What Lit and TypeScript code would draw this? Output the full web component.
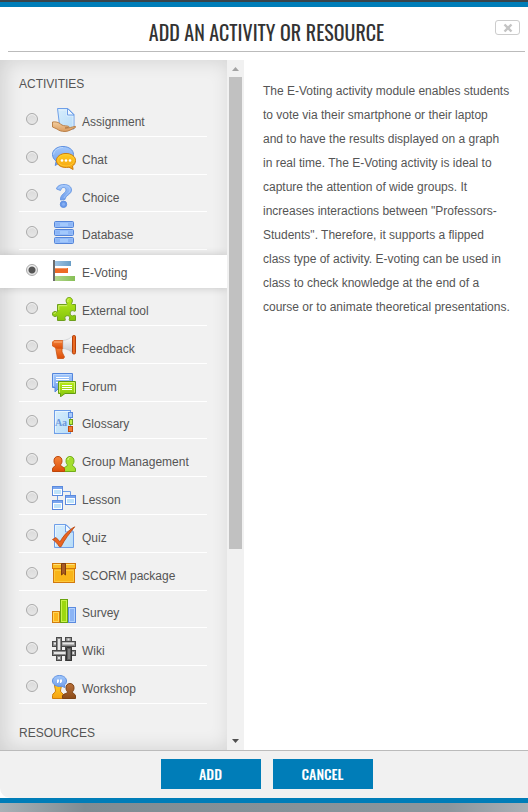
import { LitElement, html, svg, css, type TemplateResult } from "lit";
import { customElement, property, state } from "lit/decorators.js";
import { classMap } from "lit/directives/class-map.js";

const gradients = svg`
  <defs>
    <linearGradient id="sky" x1="0" y1="0" x2="0" y2="1"><stop offset="0" stop-color="#a3c8fb"/><stop offset="1" stop-color="#6f9dea"/></linearGradient>
    <linearGradient id="page" x1="0" y1="0" x2="1" y2="1"><stop offset="0" stop-color="#d8eefc"/><stop offset="1" stop-color="#b7dcf8"/></linearGradient>
    <linearGradient id="gold" x1="0" y1="0" x2="0" y2="1"><stop offset="0" stop-color="#ffcb22"/><stop offset="1" stop-color="#f5a212"/></linearGradient>
    <linearGradient id="fire" x1="0" y1="0" x2="0" y2="1"><stop offset="0" stop-color="#f5843a"/><stop offset="1" stop-color="#dc4d08"/></linearGradient>
    <linearGradient id="lime" x1="0" y1="0" x2="0" y2="1"><stop offset="0" stop-color="#b8ec1c"/><stop offset="1" stop-color="#84c40c"/></linearGradient>
    <linearGradient id="skin" x1="0" y1="0" x2="0" y2="1"><stop offset="0" stop-color="#f4cfa0"/><stop offset="1" stop-color="#d99b5f"/></linearGradient>
    <linearGradient id="steel" x1="0" y1="0" x2="1" y2="0"><stop offset="0" stop-color="#9fc3e2"/><stop offset="1" stop-color="#6a9ec6"/></linearGradient>
    <linearGradient id="leaf" x1="0" y1="0" x2="1" y2="0"><stop offset="0" stop-color="#b3d68c"/><stop offset="1" stop-color="#86bf55"/></linearGradient>
    <linearGradient id="cone" x1="0" y1="0" x2="0" y2="1"><stop offset="0" stop-color="#ffffff"/><stop offset="1" stop-color="#c3c6cc"/></linearGradient>
    <linearGradient id="wood" x1="0" y1="0" x2="0" y2="1"><stop offset="0" stop-color="#b9703a"/><stop offset="1" stop-color="#8b4a17"/></linearGradient>
  </defs>`;

const disk = (y: number) => svg`
  <rect x="2.5" y=${y + 0.5} width="19" height="6" rx="1" fill="#7faaf0" stroke="#5585d8"/>
  <rect x="3.5" y=${y + 1.5} width="17" height="4" fill="#8db6f6" stroke="#94bcf9"/>
  <rect x="8" y=${y + 2} width="8" height="3" fill="#a3c9fc"/>`;

const lessonBox = (x: number, y: number) => svg`
  <rect x=${x + 0.5} y=${y + 0.5} width="10" height="9" fill="#fff" stroke="#5b8ade"/>
  <rect x=${x + 1} y=${y + 1} width="9" height="2" fill="#7aa6ee"/>
  <rect x=${x + 2} y=${y + 4} width="7" height="4" fill="#bfe3fa"/>`;

const surveyBar = (x: number, y: number, fill: string, edge: string, light: string) => svg`
  <rect x=${x + 0.5} y=${y + 0.5} width="7" height=${23 - y} fill=${fill} stroke=${edge}/>
  <rect x=${x + 1.5} y=${y + 1.5} width="5" height=${21 - y} fill="none" stroke=${light}/>`;

const icons: Record<string, TemplateResult> = {
  assignment: svg`
    <path d="M5.500.5H16l6 6V21H8z" fill="url(#page)" stroke="#6f9fe8"/>
    <path d="M7 2h8v6h6v12" fill="none" stroke="#f1f9fe" stroke-width=".6"/>
    <path d="M15.500.5v6.500H22z" fill="#eef7fe" stroke="#6f9fe8"/>
    <path d="M.5 14c3-.5 6 .2 8 2 2 1.800 4 1.800 6.500 2 2 .2 2.500 1 1 1.500l-3 .5c4 .2 7-1 10.200-1.600.8 0 .8.800-.2 1.300-3.500 1.600-6.500 3.800-10 3.800-3.500 0-6-.8-8-2.500L.5 19z" fill="url(#skin)" stroke="#b57a42" stroke-width=".9"/>`,
  chat: svg`
    <path d="M11 .5C17 .5 21.500 4 21.500 8.500S17 17 11 17c-1.200 0-2 0-3-.4L3.200 19.500 4.200 15C1.800 13.500.5 11 .5 8.500.5 4 5 .5 11 .5z" fill="url(#sky)" stroke="#5f90e0"/>
    <path d="M11 1.500C6 1.500 1.800 4.500 1.600 8.500" fill="none" stroke="#bcd8fd"/>
    <path d="M14 7.500c5.500 0 9.500 3 9.500 7 0 2.500-1.200 4.300-3 5.500l.6 3.500-4.100-2.300c-7 1.300-12.500-2-12.500-6.700 0-4 4-7 9.500-7z" fill="url(#gold)" stroke="#cf7e0a"/>
    <ellipse cx="14" cy="14.300" rx="8.300" ry="5.700" fill="none" stroke="#ffd23a" stroke-width=".7"/>
    <circle cx="10" cy="14.500" r="1.300" fill="#fff"/><circle cx="14" cy="14.500" r="1.300" fill="#fff"/><circle cx="18" cy="14.500" r="1.300" fill="#fff"/>`,
  choice: svg`
    <path d="M4.500 5C5 2 8 .5 12 .5c4.500 0 7.500 2.200 7.500 5.500 0 4.500-6 5-6.500 9.500l-4.500.5C8 10 14 9.500 14 6c0-1.700-1-2.500-2.600-2.500C9.500 3.500 9.500 5 8.500 6.500z" fill="url(#sky)" stroke="#5f90e0" stroke-width=".8"/>
    <path d="M6.500 4.500C8 2 10 1.700 12 1.700c3.500 0 6 1.300 6 4.300 0 3-4.500 4.500-6 8" fill="none" stroke="#b0cffc" stroke-width=".7"/>
    <circle cx="11.500" cy="20.300" r="3.200" fill="#6a99ea" stroke="#5f90e0"/>
    <circle cx="11.500" cy="20.300" r="1.500" fill="#86b0f4"/>`,
  database: svg`${disk(0)}${disk(8)}${disk(16)}`,
  evoting: svg`
    <rect x="1" y="1" width="2" height="21" fill="#6c6c6c"/>
    <rect x="3" y="2" width="16" height="5" fill="url(#steel)"/>
    <rect x="3" y="9" width="13" height="5" fill="#ee6a24"/>
    <rect x="3" y="9" width="12" height="1" fill="#f59561"/>
    <rect x="3" y="17" width="20" height="5" fill="url(#leaf)"/>`,
  tool: svg`
    <path d="M5.500 7.500H14c1.400 0 1.200-.8.700-1.600C13.300 3.200 14.500.5 17.200.5s4 2.700 2.600 5.400c-.5.8-.5 1.600.7 1.600h3v6c0 .8-.6 1-1.300.6-2.300-1.300-4 .2-4 2.200s1.800 3.400 4 2.200c.8-.5 1.300-.2 1.300.6v4.400h-5.600c-.9 0-1-.7-.5-1.300 1-1.900-.2-3.500-2.100-3.500s-3.200 1.600-2.100 3.500c.4.600.3 1.300-.6 1.300H5.500V20c0-1-.5-1.200-1.200-.8C2.300 20.200.5 19 .5 17s1.800-3.200 3.800-2.200c.7.4 1.200.2 1.200-.8z" fill="url(#lime)" stroke="#6d9f1c"/>
    <path d="M6.800 13V8.700h8.400M16 5c-.8-2 .2-3.200 1.300-3.200M2 17c.2-1 1-1.500 2-1.200" fill="none" stroke="#dff58c" stroke-width=".8"/>`,
  feedback: svg`
    <path d="M3.500 12h6.500v5l2.500 5-1 1.500H5.500z" fill="url(#fire)" stroke="#c9500f" stroke-width=".8"/>
    <path d="M2 5.500h9v8H5L.5 11V7z" fill="url(#fire)" stroke="#d65a16" stroke-width=".8"/>
    <path d="M11 5.500c4-.5 7-2 9.500-4.500v17c-2.500-2.500-5.500-4-9.500-4.500z" fill="url(#cone)" stroke="#b7babf" stroke-width=".5"/>
    <rect x="20.500" y=".5" width="3" height="18.500" rx="1.300" fill="#ea6a22" stroke="#b5400a"/>
    <path d="M2 7h8" stroke="#fbb07a"/>`,
  forum: svg`
    <path d="M.5.5h20v14H7.500L3 19v-4.500H.5z" fill="url(#sky)" stroke="#5486dc"/>
    <path d="M1.500 13V1.500h18" fill="none" stroke="#bdd8fd"/>
    <path d="M4 4.500h13M4 6.500h13M4 9.500h5" stroke="#fff"/>
    <path d="M6.500 8.500h17v12H13L8.500 23.800v-3.300h-2z" fill="url(#lime)" stroke="#639c10"/>
    <path d="M7.500 19.500V9.500h15v10" fill="none" stroke="#d6f36c"/>
    <path d="M10 12.500h10M10 14.500h10M10 16.500h10" stroke="#fff"/>`,
  glossary: svg`
    <rect x="2.500" y=".5" width="16" height="23" fill="url(#page)" stroke="#6f9fe8"/>
    <path d="M3.500 22V1.500h14" fill="none" stroke="#e8f5fe"/>
    <rect x="16.500" y="2.500" width="4" height="5" fill="#a9cbfb" stroke="#5b8ade"/>
    <rect x="17.500" y="9.500" width="3" height="5" fill="#bff04a" stroke="#6d9f1c"/>
    <rect x="16.500" y="16.500" width="4" height="5" fill="#f07a35" stroke="#c04a0c"/>
    <text class="glyph" x="9" y="16" text-anchor="middle">Aa</text>`,
  group: svg`
    <path d="M18 8.500c2.600 0 4 1.800 4 4.300 0 2.200-.8 3.200-1.500 4-.5 2 3 1.700 3 4.200v2.500h-12V21c0-2.500 4.500-2.200 4-4.200-.8-.8-1.500-1.800-1.500-4 0-2.500 1.400-4.300 4-4.300z" fill="#a4de2c" stroke="#72ad1a"/>
    <path d="M16 12c0-1.800 1-2.500 2.300-2.500" fill="none" stroke="#dcf89a"/>
    <path d="M6 8.500c2.600 0 4 1.800 4 4.300 0 2.200-.8 3.200-1.500 4-.5 2 4 1.700 4 4.200v2.500H.5V21c0-2.500 3.500-2.200 3-4.200-.8-.8-1.500-1.800-1.500-4 0-2.500 1.400-4.300 4-4.300z" fill="url(#fire)" stroke="#bd4608"/>`,
  lesson: svg`
    <path d="M11 5.500h7.500V9M5.500 10v4" fill="none" stroke="#6f9fe8"/>
    ${lessonBox(0, 0)}${lessonBox(13, 9)}${lessonBox(0, 14)}`,
  quiz: svg`
    <path d="M2.500.5H14L21.500 8v15.500h-19z" fill="url(#page)" stroke="#6f9fe8"/>
    <path d="M3.500 22V1.500H13" fill="none" stroke="#e8f5fe"/>
    <path d="M13.500.5V8h8z" fill="#f0f8fe" stroke="#6f9fe8"/>
    <path d="M.5 15.500L4 13.500l4 4.300c4-7 8.500-11.500 14.700-15C18 9 12.500 15.500 9 22.800H7.500C5.500 19.500 3 17 .5 15.500z" fill="#ea6420" stroke="#b5440c" stroke-width=".8"/>`,
  scorm: svg`
    <rect x="1.500" y="6.500" width="21" height="14" fill="#f9b418" stroke="#d2790c"/>
    <path d="M2.500 19.500V8.500h19v11z" fill="none" stroke="#fcc93c"/>
    <rect x=".5" y="1.500" width="23" height="5" fill="#fbbd22" stroke="#d2790c"/>
    <path d="M1.500 2.500h21" stroke="#ffe07a"/>
    <path d="M9.500 1.500h4v11.500l-2-1.800-2 1.800z" fill="#a85a24" stroke="#7d3c10"/>`,
  survey: svg`
    ${surveyBar(0, 12, "#fdb61a", "#d27d0c", "#ffd65a")}
    ${surveyBar(16, 8, "#8bb4f5", "#5b8ade", "#b3d2fd")}
    ${surveyBar(8, 0, "#9dd80f", "#6aa30e", "#c9f24a")}`,
  wiki: svg`
    <g fill="#8c8c8c" stroke="#4a4a4a">
      <rect x="13.500" y=".5" width="6" height="23"/>
      <rect x=".5" y="4.500" width="23" height="5"/>
      <rect x="4.500" y=".5" width="5" height="23"/>
      <rect x=".5" y="13.500" width="23" height="5"/>
      <path d="M14.500 10.500h5v13h-5z" fill="#5c5c5c" stroke="#333"/>
    </g>
    <path d="M2 6.500h2M10.500 6.500H22M7 2v11M16.500 1.500v2M2 16h11.500M20.500 16H22M7 20v2" stroke="#e6e6e6" stroke-width="2"/>
    <path d="M17 12v10" stroke="#a4a4a4"/>`,
  workshop: svg`
    <path d="M2.500 10h7c-.3 3-1 4.500-1 6 0 2 3 2 3 4.500v3H.5v-3c0-2.500 3-2.500 3-4.500 0-1.500-.7-3-1-6z" fill="url(#gold)" stroke="#cf7e0a"/>
    <path d="M18 8.500c2.600 0 4 1.800 4 4.300 0 2.200-.8 3.200-1.500 4-.5 2 3 1.700 3 4.200v2.500h-13V21c0-2.500 5.500-2.200 5-4.200-.8-.8-1.500-1.800-1.500-4 0-2.500 1.400-4.300 4-4.300z" fill="url(#wood)" stroke="#7d4214"/>
    <path d="M7.500.5c4 0 7 2.300 7 5.500 0 1.700-.7 3-2 4l.5 2.500-3.500-1.300C4.500 12.200.5 9.500.5 6 .5 2.800 3.500.5 7.500.5z" fill="url(#sky)" stroke="#5f90e0"/>
    <path d="M5 4.500h2v2L6 8H5zM8 4.500h2v2L9 8H8z" fill="#fff"/>`,
};

interface Activity {
  id: string;
  name: string;
}

const activities: Activity[] = [
  { id: "assignment", name: "Assignment" },
  { id: "chat", name: "Chat" },
  { id: "choice", name: "Choice" },
  { id: "database", name: "Database" },
  { id: "evoting", name: "E-Voting" },
  { id: "tool", name: "External tool" },
  { id: "feedback", name: "Feedback" },
  { id: "forum", name: "Forum" },
  { id: "glossary", name: "Glossary" },
  { id: "group", name: "Group Management" },
  { id: "lesson", name: "Lesson" },
  { id: "quiz", name: "Quiz" },
  { id: "scorm", name: "SCORM package" },
  { id: "survey", name: "Survey" },
  { id: "wiki", name: "Wiki" },
  { id: "workshop", name: "Workshop" },
];

const description = [
  "The E-Voting activity module enables students",
  "to vote via their smartphone or their laptop",
  "and to have the results displayed on a graph",
  "in real time. The E-Voting activity is ideal to",
  "capture the attention of wide groups. It",
  'increases interactions between "Professors-',
  'Students". Therefore, it supports a flipped',
  "class type of activity. E-voting can be used in",
  "class to check knowledge at the end of a",
  "course or to animate theoretical presentations.",
].join("\n");

@customElement("activity-icon")
class ActivityIcon extends LitElement {
  @property() name = "";

  static styles = css`
    :host { display: block; width: 24px; height: 24px; }
    svg { display: block; }
    .glyph { font: bold 10px "Liberation Serif", serif; fill: #6c98dc; }
  `;

  render() {
    return html`<svg width="24" height="24" viewBox="0 0 24 24" aria-hidden="true">${gradients}${icons[this.name]}</svg>`;
  }
}

@customElement("app-root")
class AppRoot extends LitElement {
  @state() private selected = "evoting";

  static styles = css`
    :host {
      display: flex;
      flex-direction: column;
      box-sizing: border-box;
      min-height: 100vh;
      padding: 2px 0 9px;
      background:
        linear-gradient(#3a444b, #3a444b) top / 100% 2px no-repeat,
        linear-gradient(90deg, #a9b1b6, #7f8c93 16%, #8b969d 85%, #aab0b6);
      color: #555;
      font-family: "Liberation Sans", Arial, sans-serif;
      font-size: 12px;
    }
    .dialog {
      flex: 1;
      display: flex;
      flex-direction: column;
      background: #fff;
      border: solid #007db8;
      border-width: 5px 0;
    }
    .header {
      display: grid;
      grid-template-columns: 1fr auto 1fr;
      margin: 0 3px 8px 8px;
      height: 44px;
      border-bottom: 1px solid #bbb;
    }
    .title {
      grid-column: 2;
      margin: 0;
      padding-top: 3px;
      color: #333;
      font-family: Oswald, "Liberation Sans Narrow", "Liberation Sans", sans-serif;
      font-size: 20px;
      font-weight: 400;
      line-height: 44px;
      text-transform: uppercase;
      white-space: nowrap;
    }
    .close {
      justify-self: end;
      display: grid;
      place-items: center;
      box-sizing: border-box;
      width: 25px;
      height: 15px;
      margin: 13px 5px 0 0;
      padding: 0;
      border: 1px solid #ccc;
      border-radius: 3px;
      background: #fff;
    }
    .body {
      flex: 1;
      display: grid;
      grid-template-columns: 244px 1fr;
    }
    .chooser { display: flex; }
    .options {
      flex: 1;
      display: flex;
      flex-direction: column;
      background: #f1f1f1;
      box-shadow: inset 4px 0 20px rgba(0, 0, 0, 0.14);
    }
    .group {
      box-sizing: border-box;
      height: 39px;
      margin: 0;
      padding: 5px 0 0 19px;
      font-size: 12px;
      font-weight: 400;
      line-height: 39px;
      text-transform: uppercase;
    }
    .resources { height: 46px; padding-top: 10px; }
    .list {
      flex: 1;
      display: grid;
      grid-auto-rows: 1fr;
      margin: 0;
      padding: 0;
      list-style: none;
    }
    .item { display: flex; }
    .option {
      flex: 1;
      display: flex;
      align-items: center;
      margin: 5px 20px 0 19px;
      padding-left: 7px;
      border-bottom: 1px solid #fff;
    }
    .option.on {
      margin: 5px 0 0;
      padding-left: 26px;
      background: #fff;
      box-shadow: 0 0 8px rgba(0, 0, 0, 0.18);
      clip-path: inset(-10px 0);
    }
    .radio {
      appearance: none;
      box-sizing: border-box;
      width: 12px;
      height: 12px;
      margin: 0 14px 2px 0;
      border: 1px solid #aaa;
      border-radius: 50%;
      background: linear-gradient(#dadada, #e6e6e6);
      box-shadow: inset 0 1px 1px #f4f4f4;
    }
    .radio:checked { background: radial-gradient(circle, #555 3px, #e4e4e4 4px); }
    .name { padding: 4px 0 0 6px; }
    .scrollbar {
      display: flex;
      flex-direction: column;
      align-items: center;
      width: 17px;
      background: #f1f1f1;
    }
    .arrow { display: block; height: 17px; }
    .track { flex: 1; width: 13px; }
    .thumb { height: 72%; background: #c1c1c1; }
    .description { padding: 19px 12px 0 19px; }
    .description p { margin: 0; line-height: 24px; white-space: pre-line; }
    .footer {
      display: flex;
      justify-content: center;
      gap: 12px;
      padding: 8px 3px 9px 8px;
      border-top: 1px solid #bbb;
      border-radius: 0 0 0 10px;
      background: #f1f1f1;
    }
    .button {
      width: 100px;
      height: 30px;
      padding: 0;
      border: 0;
      background: #007db8;
      color: #fff;
      font-family: Oswald, "Liberation Sans Narrow", "Liberation Sans", sans-serif;
      font-size: 14px;
      font-weight: 500;
      line-height: 28px;
      text-transform: uppercase;
    }
  `;

  render() {
    return html`
      <form class="dialog" @submit=${(e: Event) => e.preventDefault()}>
        <header class="header">
          <h1 class="title">Add an activity or resource</h1>
          <button class="close" type="button" aria-label="Close">
            <svg width="10" height="10" viewBox="0 0 10 10" aria-hidden="true">
              <path d="M1.500 1.500l7 7M8.500 1.500l-7 7" stroke="#c4c4c4" stroke-width="2.400" />
            </svg>
          </button>
        </header>
        <div class="body">
          <div class="chooser">
            <div class="options">
              <h2 class="group">Activities</h2>
              <ul class="list">
                ${activities.map(
                  (a) => html`
                    <li class="item">
                      <label class=${classMap({ option: true, on: a.id === this.selected })}>
                        <input
                          class="radio"
                          type="radio"
                          name="activity"
                          .value=${a.id}
                          .checked=${a.id === this.selected}
                          @change=${() => (this.selected = a.id)}
                        />
                        <activity-icon name=${a.id}></activity-icon>
                        <span class="name">${a.name}</span>
                      </label>
                    </li>
                  `
                )}
              </ul>
              <h2 class="group resources">Resources</h2>
            </div>
            <div class="scrollbar" aria-hidden="true">
              <svg class="arrow" width="17" height="17" viewBox="0 0 17 17"><path d="M5 11l3.500-4L12 11z" fill="#a3a3a3" /></svg>
              <div class="track"><div class="thumb"></div></div>
              <svg class="arrow" width="17" height="17" viewBox="0 0 17 17"><path d="M5 6l3.500 4L12 6z" fill="#505050" /></svg>
            </div>
          </div>
          <div class="description">
            <p>${description}</p>
          </div>
        </div>
        <footer class="footer">
          <button class="button" type="submit">Add</button>
          <button class="button" type="button">Cancel</button>
        </footer>
      </form>
    `;
  }
}
